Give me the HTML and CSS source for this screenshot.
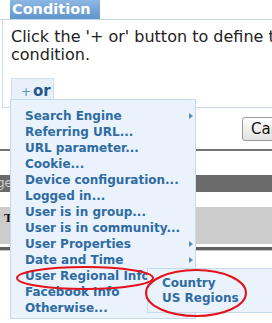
FILE: index.html
```html
<!DOCTYPE html>
<html lang="en">
<head>
  <meta charset="UTF-8">
  <meta name="viewport" content="width=device-width, initial-scale=1.0">
  <title>Condition</title>
  <link rel="stylesheet" href="styles.css">
</head>
<body>
  <div class="page">
    <div class="tabbar">
      <div class="tab">Condition</div>
    </div>

    <div class="panel">
      <p class="hint">Click the '+ or' button to define the condition.</p>
      <button class="or-btn" type="button"><span class="plus">+</span>or</button>
    </div>

    <div class="actions">
      <button class="cancel" type="button">Cancel</button>
    </div>

    <div class="rule"></div>
    <div class="darkbar"><span class="darkbar-text">Merge</span></div>
    <div class="greybox"><span class="greybox-t">T</span></div>
    <div class="rule thin"></div>

    <ul class="menu">
      <li class="has-sub">Search Engine</li>
      <li>Referring URL...</li>
      <li>URL parameter...</li>
      <li>Cookie...</li>
      <li>Device configuration...</li>
      <li>Logged in...</li>
      <li>User is in group...</li>
      <li>User is in community...</li>
      <li class="has-sub">User Properties</li>
      <li class="has-sub">Date and Time</li>
      <li class="has-sub">User Regional Info</li>
      <li>Facebook Info</li>
      <li>Otherwise...</li>
    </ul>

    <ul class="submenu">
      <li>Country</li>
      <li>US Regions</li>
    </ul>

    <svg class="marks" width="272" height="323" viewBox="0 0 272 323">
      <ellipse cx="85" cy="278" rx="68" ry="11" />
      <ellipse cx="196" cy="293" rx="50" ry="23" />
    </svg>
  </div>
</body>
</html>
```

FILE: styles.css
```css
body {
  margin: 0;
  padding: 0;
  background: #ffffff;
  font-family: 'DejaVu Sans', sans-serif;
}

.page {
  position: relative;
  width: 272px;
  height: 323px;
  overflow: hidden;
  background: #ffffff;
}

.tabbar {
  height: 19px;
  padding-left: 10px;
  border-bottom: 1px solid #c4d8ec;
}

.tab {
  width: 90px;
  height: 19px;
  box-sizing: border-box;
  padding-left: 2px;
  background: linear-gradient(#8db7e2, #5f95cd);
  color: #ffffff;
  font-weight: bold;
  font-size: 14.5px;
  line-height: 18px;
}

.panel {
  margin-left: 2px;
  height: 87px;
  border: 1px solid #c9dbed;
  border-top: none;
  border-right: none;
  padding-left: 8px;
}

.hint {
  margin: 0;
  padding-top: 8px;
  width: 290px;
  font-size: 16px;
  line-height: 18px;
  color: #222222;
}

.or-btn {
  margin-top: 14px;
  width: 43px;
  height: 24px;
  padding: 0 0 0 9px;
  text-align: left;
  background: #e8f1fa;
  border: 1px solid #cddff0;
  border-bottom: none;
  font-family: 'DejaVu Sans', sans-serif;
  font-weight: bold;
  font-size: 15px;
  color: #24578a;
}

.plus {
  font-weight: normal;
  font-size: 12px;
  color: #5b90c8;
  margin-right: 2px;
}

.actions {
  height: 41px;
  padding-left: 242px;
  padding-top: 9px;
  box-sizing: border-box;
  display: flex;
}

.cancel {
  flex-shrink: 0;
  height: 24px;
  padding: 0 8px;
  border: 1px solid #9a9a9a;
  border-radius: 3px;
  background: linear-gradient(#ffffff, #e2e2e2);
  font-family: 'DejaVu Sans', sans-serif;
  font-size: 15px;
  color: #111111;
}

.rule {
  height: 2px;
  background: #747474;
}

.rule.thin {
  height: 3px;
  margin-top: 3px;
  background: #5e5e5e;
  border-bottom: 1px solid #c8c8c8;
}

.darkbar {
  margin-top: 24px;
  height: 17px;
  background: #6b6b6b;
  overflow: hidden;
  position: relative;
}

.darkbar-text {
  position: absolute;
  right: 262px;
  top: 1px;
  font-size: 12px;
  color: #cfcfcf;
  margin-right: -2px;
}

.greybox {
  margin-top: 15px;
  height: 37px;
  background: #cccccc;
  padding-left: 4px;
}

.greybox-t {
  font-family: 'Liberation Serif', serif;
  font-weight: bold;
  font-size: 13px;
  line-height: 18px;
  color: #111111;
}

.menu {
  position: absolute;
  left: 10px;
  top: 99px;
  width: 186px;
  margin: 0;
  padding: 8px 0 2px 14px;
  box-sizing: border-box;
  list-style: none;
  background: #eaf3fc;
  border: 1px solid #c6daee;
}

.menu li,
.submenu li {
  position: relative;
  font-weight: bold;
  font-size: 12px;
  line-height: 16px;
  color: #2f6ba3;
  white-space: nowrap;
}

.menu li.has-sub::after {
  content: "";
  position: absolute;
  right: 2px;
  top: 5px;
  border-left: 4px solid #5a8bbd;
  border-top: 3px solid transparent;
  border-bottom: 3px solid transparent;
}

.submenu {
  position: absolute;
  left: 147px;
  top: 268px;
  width: 140px;
  margin: 0;
  padding: 7px 0 6px 14px;
  box-sizing: border-box;
  list-style: none;
  background: #eaf3fc;
  border: 1px solid #c6daee;
}

.submenu li {
  line-height: 15px;
}

.marks {
  position: absolute;
  left: 0;
  top: 0;
  pointer-events: none;
}

.marks ellipse {
  fill: none;
  stroke: #e3121c;
  stroke-width: 2;
}
```
